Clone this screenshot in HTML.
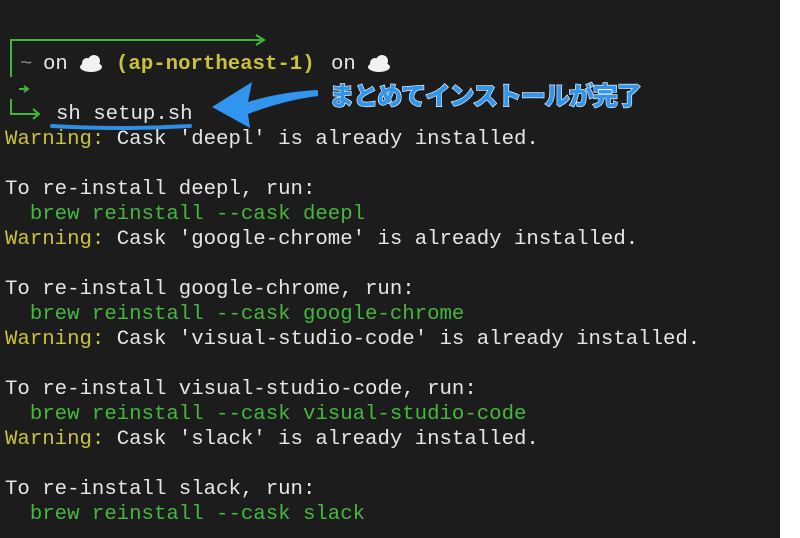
<!DOCTYPE html>
<html><head><meta charset="utf-8"><style>
body{margin:0;width:800px;height:538px;background:#fff;overflow:hidden;position:relative}
#t{position:absolute;left:0;top:0;width:780px;height:538px;background:#1c1c1c}
.l{position:absolute;left:5px;font-family:"Liberation Mono",monospace;font-size:20.7px;line-height:25px;color:#e6e6e6;white-space:pre}
.y{color:#c9c23a}.g{color:#44b83c}.yb{color:#c9c23a;font-weight:bold}
.jp{position:absolute;left:329px;top:76px;font-family:"Noto Sans CJK JP",sans-serif;font-weight:900;font-size:25.5px;color:#2f95ee;-webkit-text-stroke:1.2px #fff;paint-order:stroke;letter-spacing:-1.5px}
</style></head><body><div id="t">
<svg width="780" height="538" style="position:absolute;left:0;top:0">
<path d="M11 77 V40 H262" stroke="#3fb83a" stroke-width="2" fill="none"/>
<path d="M256 35 L264 40 L256 45" stroke="#3fb83a" stroke-width="2" fill="none"/>
<path d="M19 89 H27 M24 86 L28 89 L24 92" stroke="#3fb83a" stroke-width="2" fill="none"/>
<path d="M11 99 V114 H38 M33 109 L39 114 L33 119" stroke="#3fb83a" stroke-width="2" fill="none"/>
<path d="M52 126 Q120 130 190 126" stroke="#2f8fe6" stroke-width="4" fill="none" stroke-linecap="round"/>
<path d="M318 90 Q280 92 248 102 L252 82 L212 107 L250 128 L248 114 Q285 100 318 96 Z" fill="#2f95ee"/>
<g fill="#f2f2f2">
<ellipse cx="91" cy="67" rx="11" ry="5"/><circle cx="87" cy="63" r="5"/><circle cx="94" cy="61" r="6"/>
<ellipse cx="379" cy="67" rx="11" ry="5"/><circle cx="375" cy="63" r="5"/><circle cx="382" cy="61" r="6"/>
</g>
</svg>
<div class="l" style="top:52px;left:20px;color:#888">~</div>
<div class="l" style="top:52px;left:43px">on</div>
<div class="l yb" style="top:52px;left:116px">(ap-northeast-1)</div>
<div class="l" style="top:52px;left:331px">on</div>
<div class="l" style="top:102px;left:56px">sh setup.sh</div>
<div class="l" style="top:127px"><span class="y">Warning:</span> Cask 'deepl' is already installed.</div>
<div class="l" style="top:177px">To re-install deepl, run:</div>
<div class="l g" style="top:202px">  brew reinstall --cask deepl</div>
<div class="l" style="top:227px"><span class="y">Warning:</span> Cask 'google-chrome' is already installed.</div>
<div class="l" style="top:277px">To re-install google-chrome, run:</div>
<div class="l g" style="top:302px">  brew reinstall --cask google-chrome</div>
<div class="l" style="top:327px"><span class="y">Warning:</span> Cask 'visual-studio-code' is already installed.</div>
<div class="l" style="top:377px">To re-install visual-studio-code, run:</div>
<div class="l g" style="top:402px">  brew reinstall --cask visual-studio-code</div>
<div class="l" style="top:427px"><span class="y">Warning:</span> Cask 'slack' is already installed.</div>
<div class="l" style="top:477px">To re-install slack, run:</div>
<div class="l g" style="top:502px">  brew reinstall --cask slack</div>
<div class="jp">まとめてインストールが完了</div>
</div></body></html>
